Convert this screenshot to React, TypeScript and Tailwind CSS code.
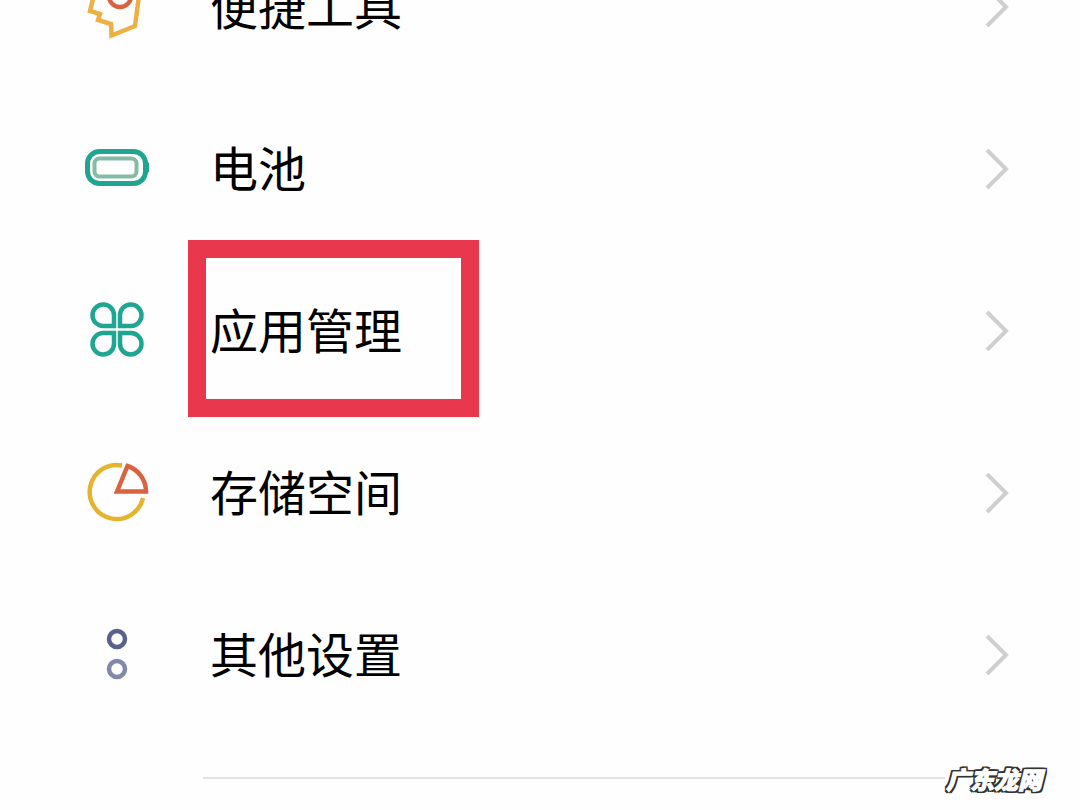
const rowText = "pb-[6px] text-[48px] leading-none text-black font-['Noto_Sans_CJK_SC','Noto_Sans',sans-serif]";

function ToolsIcon() {
    return (
        <svg width="64" height="64" viewBox="85 -25 64 64" className="overflow-visible" fill="none">
            <path d="M93 -1 L90 11 L100 14 L98 20 L111 24 L111.5 35.5 L135 26 L140 -12" stroke="#eeb045" strokeWidth="4.5" strokeLinejoin="miter" />
            <circle cx="120" cy="-4" r="11" stroke="#d9623f" strokeWidth="4.5" />
        </svg>
    );
}

function BatteryIcon() {
    return (
        <svg width="64" height="64" viewBox="85 137 64 64" fill="none">
            <rect x="87.5" y="151.5" width="58" height="32" rx="12" stroke="#1fa592" strokeWidth="5" />
            <rect x="94.5" y="158.5" width="42" height="18" rx="5" stroke="#85bba5" strokeWidth="4" />
            <path d="M146 161 L149 163 V172 L146 174 Z" fill="#1fa592" />
        </svg>
    );
}

function AppsIcon() {
    return (
        <svg width="64" height="64" viewBox="85 299 64 64" fill="none" stroke="#1fa592" strokeWidth="4.5">
            <path d="M114 326 H103.5 A10.75 10.75 0 1 1 114 315.25 Z" />
            <path d="M120 326 H131 A10.75 10.75 0 1 0 120 315.25 Z" />
            <path d="M114 333 H103.5 A10.75 10.75 0 1 0 114 343.75 Z" />
            <path d="M120 333 H131 A10.75 10.75 0 1 1 120 343.75 Z" />
        </svg>
    );
}

function StorageIcon() {
    return (
        <svg width="64" height="64" viewBox="85 461 64 64" fill="none">
            <path d="M122 465.5 A27 27 0 1 0 143 498" stroke="#e5b32e" strokeWidth="4.5" />
            <path d="M117 491.5 L127.5 466 A27 27 0 0 1 146 491.5 Z" stroke="#d9623f" strokeWidth="4.5" />
        </svg>
    );
}

function MoreIcon() {
    return (
        <svg width="64" height="64" viewBox="85 623 64 64" fill="none" strokeWidth="4.5">
            <circle cx="117" cy="639" r="8" stroke="#5b5f8c" />
            <circle cx="117" cy="669" r="8" stroke="#8189ab" />
        </svg>
    );
}

function Chevron() {
    return (
        <svg width="24" height="40" viewBox="0 0 24 40" fill="none" stroke="#cfcfcf" strokeWidth="4" className="mr-[71px] ml-auto">
            <path d="M2 1 L21 20 L2 39" />
        </svg>
    );
}

const rows = [
    { label: "便捷工具", icon: <ToolsIcon /> },
    { label: "电池", icon: <BatteryIcon /> },
    { label: "应用管理", icon: <AppsIcon /> },
    { label: "存储空间", icon: <StorageIcon /> },
    { label: "其他设置", icon: <MoreIcon /> },
];

export default function App() {
    return (
        <div className="relative w-[1080px] h-[810px] overflow-hidden bg-[#fefefe]">
            <div className="mt-[-74px]">
                {rows.map((row) => (
                    <div key={row.label} className="flex items-center h-[162px]">
                        <div className="ml-[85px] w-[125px] shrink-0">{row.icon}</div>
                        <span className={rowText}>{row.label}</span>
                        <Chevron />
                    </div>
                ))}
            </div>
            <div className="mt-[41px] ml-[203px] w-[742px] h-[2px] bg-[#e2e2e2]" />

            {/* red highlight over the row */}
            <div className="absolute left-[188px] top-[240px] w-[291px] h-[177px] border-[18px] border-[#e9374d]" />

            {/* watermark */}
            <span className="absolute left-[946px] top-[763px] text-[24px] leading-[32px] font-black italic text-white font-['Noto_Sans_CJK_SC',sans-serif] [-webkit-text-stroke:1px_white] [text-shadow:2px_0_0_#333,-2px_0_0_#333,0_2px_0_#333,0_-2px_0_#333,2px_2px_0_#333,-2px_2px_0_#333,2px_-2px_0_#333,-2px_-2px_0_#333]">
                广东龙网
            </span>
        </div>
    );
}
